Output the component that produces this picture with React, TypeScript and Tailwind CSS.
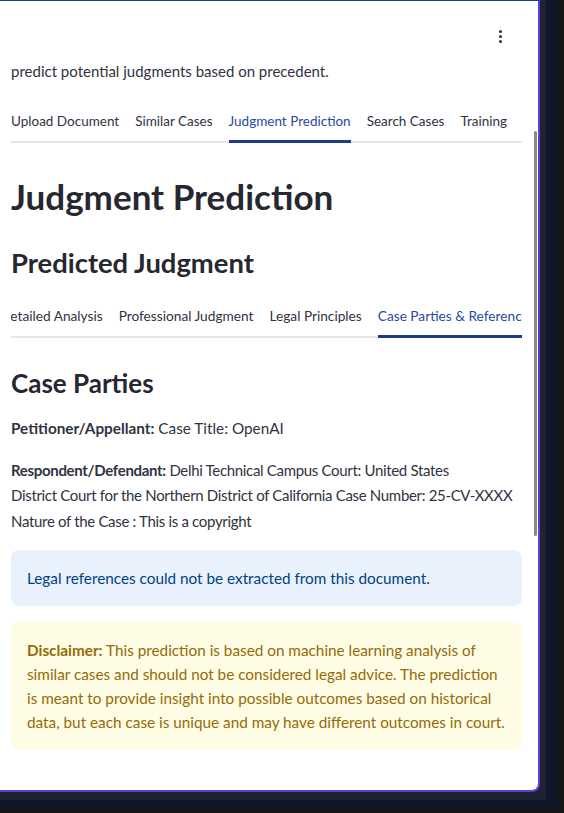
import React from "react";

const font = { fontFamily: "Lato, 'Noto Sans', sans-serif" };

function Tabs({ items, active, size }: { items: string[]; active: number; size: string }) {
  return (
    <div className="relative">
      <div className="flex gap-[16px]">
        {items.map((t, i) => (
          <div key={t} className={`relative pb-[12px] whitespace-nowrap ${size} ${i === active ? "text-[#2a4a9e]" : "text-[#31333f]"}`}>
            {t}
            {i === active && <div className="absolute left-0 right-0 bottom-0 h-[3px] bg-[#1e3a8a] z-10" />}
          </div>
        ))}
      </div>
      <div className="absolute left-0 right-0 bottom-0 h-[2px] bg-[#e6e6ea]" />
    </div>
  );
}

export default function App() {
  return (
    <div className="w-[564px] h-[813px] bg-[#161616] overflow-hidden" style={font}>
      <div className="w-[557px] h-[807px] bg-[#111729]">
        <div className="w-[546px] h-[800px] bg-[#1e2333]">
          <div className="relative w-[540px] h-[792px] bg-white border-r-2 border-b-2 border-[#5a3fd0] rounded-br-[8px] border-t border-t-[#1e3a8a] overflow-hidden">
            <div className="absolute right-[1px] top-[130px] w-[3px] h-[405px] bg-[#8a8a8a] rounded-full" />
            <div className="flex justify-end pr-[36px] pt-[29px]">
              <div className="flex flex-col gap-[2px]">
                <div className="w-[3px] h-[3px] rounded-full bg-[#31333f]" />
                <div className="w-[3px] h-[3px] rounded-full bg-[#31333f]" />
                <div className="w-[3px] h-[3px] rounded-full bg-[#31333f]" />
              </div>
            </div>
            <div className="pl-[11px] w-[522px]">
              <p className="mt-[16px] text-[15px] leading-[24px] text-[#31333f]">predict potential judgments based on precedent.</p>
              <div className="mt-[28px]">
                <Tabs items={["Upload Document", "Similar Cases", "Judgment Prediction", "Search Cases", "Training"]} active={2} size="text-[13.5px] leading-[20px]" />
              </div>
              <h1 className="mt-[31px] text-[35px] leading-[44px] font-bold text-[#262730]">Judgment Prediction</h1>
              <h2 className="mt-[27px] text-[27.4px] leading-[36px] font-bold text-[#262730]">Predicted Judgment</h2>
              <div className="mt-[25px] overflow-hidden">
                <div className="-ml-[11px]">
                  <Tabs items={["Detailed Analysis", "Professional Judgment", "Legal Principles", "Case Parties & References"]} active={3} size="text-[13.7px] leading-[20px]" />
                </div>
              </div>
              <h3 className="mt-[29px] text-[26px] leading-[32px] font-bold text-[#262730]">Case Parties</h3>
              <p className="mt-[17px] text-[15.3px] leading-[25.5px] text-[#31333f]"><b>Petitioner/Appellant:</b> Case Title: OpenAI</p>
              <p className="mt-[16px] text-[15px] tracking-[-0.32px] leading-[25.5px] text-[#31333f]"><b>Respondent/Defendant:</b> Delhi Technical Campus Court: United States<br />District Court for the Northern District of California Case Number: <span className="whitespace-nowrap">25-CV-XXXX</span><br />Nature of the Case : This is a copyright</p>
              <div className="mt-[16px] rounded-[8px] bg-[#e8f1fc] px-[16px] py-[16px] text-[15.3px] leading-[24px] text-[#004280]">Legal references could not be extracted from this document.</div>
              <div className="mt-[16px] rounded-[8px] bg-[#fffce6] px-[16px] py-[16px] text-[15.3px] leading-[24px] text-[#926c05]">
                <b>Disclaimer:</b> This prediction is based on machine learning analysis of similar cases and should not be considered legal advice. The prediction is meant to provide insight into possible outcomes based on historical data, but each case is unique and may have different outcomes in court.
              </div>
            </div>
          </div>
        </div>
      </div>
    </div>
  );
}
